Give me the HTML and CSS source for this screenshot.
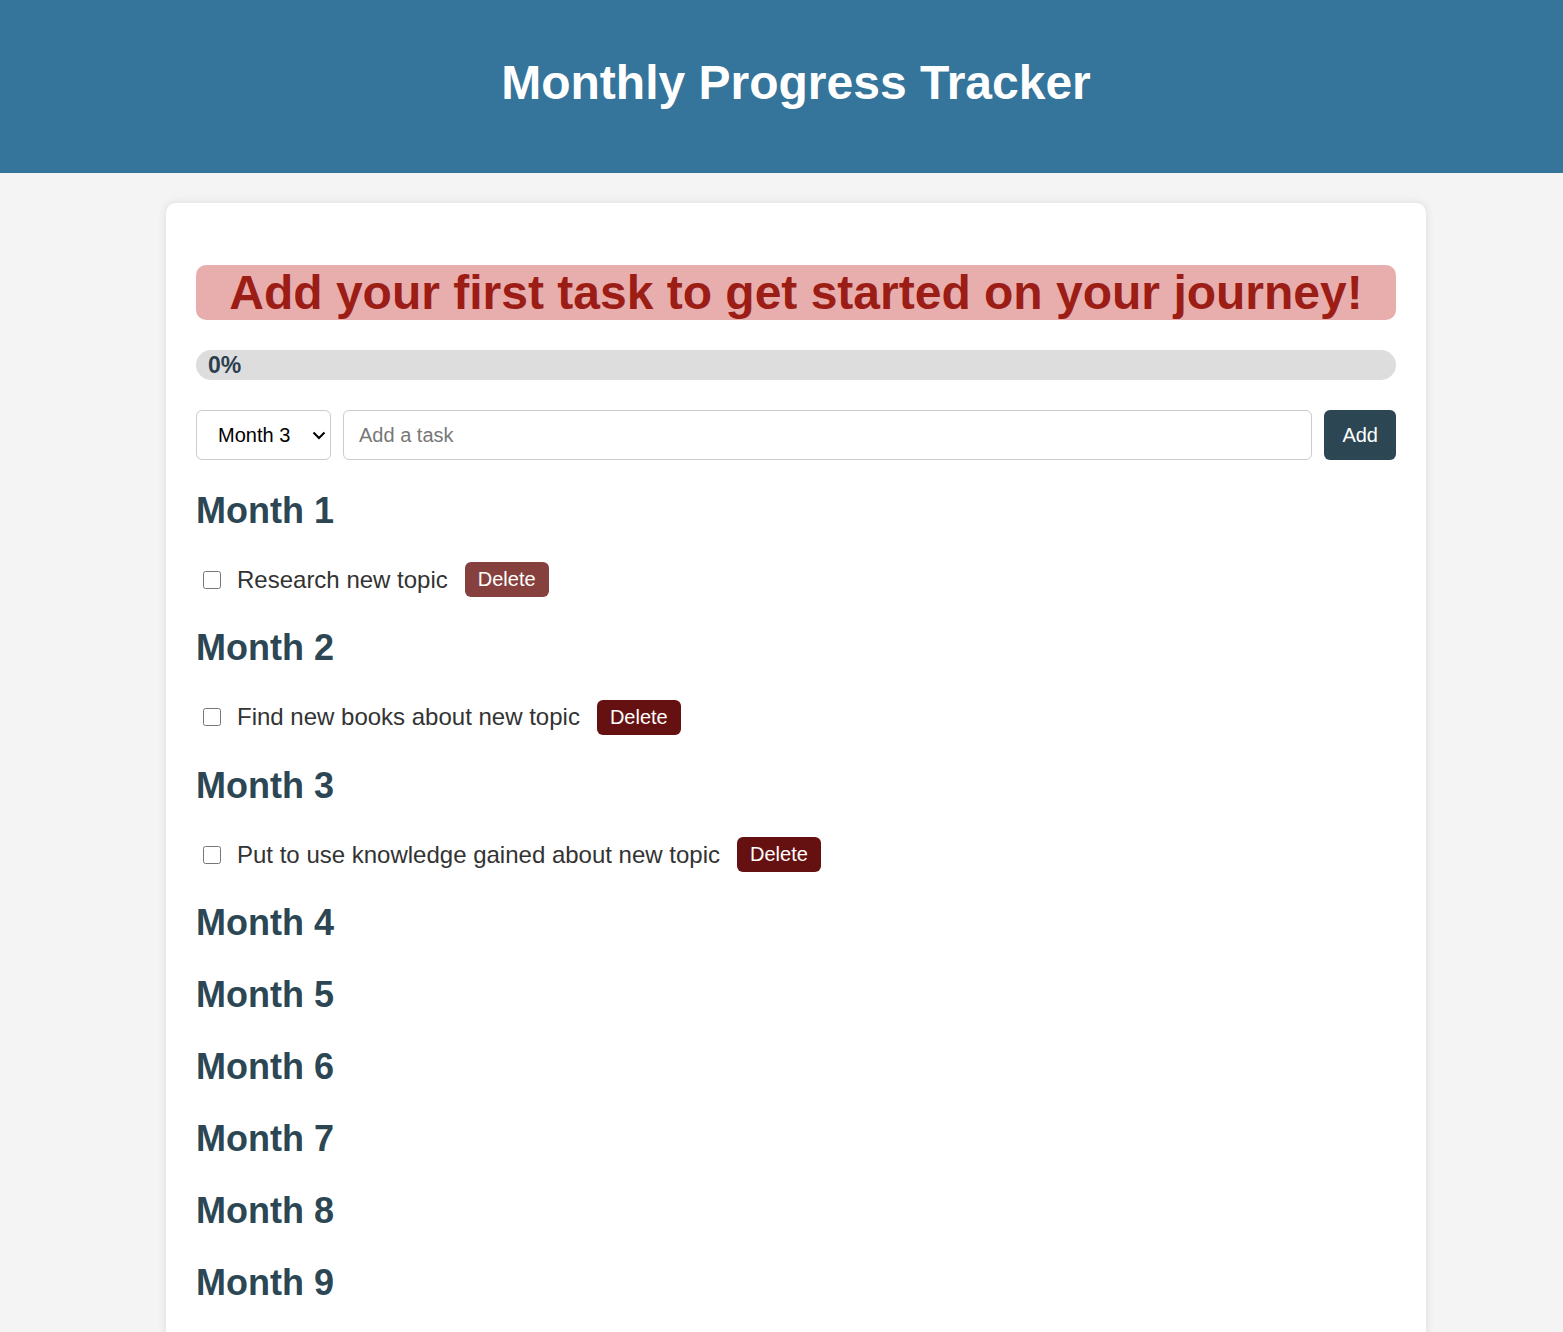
FILE: index.html
```html
<!DOCTYPE html>
<html lang="en">
<head>
<meta charset="utf-8">
<title>Monthly Progress Tracker</title>
<link rel="stylesheet" href="styles.css">
</head>
<body>
<header class="site-header">
  <h1 class="site-title">Monthly Progress Tracker</h1>
</header>
<main class="page">
  <section class="card">
    <h2 class="banner">Add your first task to get started on your journey!</h2>
    <div class="progress"><div class="progress-fill" style="width:0%"></div><span class="progress-label">0%</span></div>
    <form class="controls" onsubmit="return false">
      <div class="select-wrap">
        <select class="month-select">
          <option>Month 1</option>
          <option>Month 2</option>
          <option selected>Month 3</option>
          <option>Month 4</option>
          <option>Month 5</option>
          <option>Month 6</option>
          <option>Month 7</option>
          <option>Month 8</option>
          <option>Month 9</option>
          <option>Month 10</option>
          <option>Month 11</option>
          <option>Month 12</option>
        </select>
        <svg class="select-arrow" width="14" height="9" viewBox="0 0 14 9" aria-hidden="true"><path d="M1.5 1.5 L7 7 L12.5 1.5" fill="none" stroke="#000" stroke-width="2"/></svg>
      </div>
      <input class="task-input" type="text" placeholder="Add a task">
      <button class="add-btn" type="button">Add</button>
    </form>
    <div class="months">
      <div class="month">
        <h3 class="month-title">Month 1</h3>
        <ul class="tasks">
          <li class="task"><input type="checkbox" class="task-check"><span class="task-text">Research new topic</span><button class="delete-btn delete-hover" type="button">Delete</button></li>
        </ul>
      </div>
      <div class="month">
        <h3 class="month-title">Month 2</h3>
        <ul class="tasks">
          <li class="task"><input type="checkbox" class="task-check"><span class="task-text">Find new books about new topic</span><button class="delete-btn" type="button">Delete</button></li>
        </ul>
      </div>
      <div class="month">
        <h3 class="month-title">Month 3</h3>
        <ul class="tasks">
          <li class="task"><input type="checkbox" class="task-check"><span class="task-text">Put to use knowledge gained about new topic</span><button class="delete-btn" type="button">Delete</button></li>
        </ul>
      </div>
      <div class="month"><h3 class="month-title">Month 4</h3></div>
      <div class="month"><h3 class="month-title">Month 5</h3></div>
      <div class="month"><h3 class="month-title">Month 6</h3></div>
      <div class="month"><h3 class="month-title">Month 7</h3></div>
      <div class="month"><h3 class="month-title">Month 8</h3></div>
      <div class="month"><h3 class="month-title">Month 9</h3></div>
      <div class="month"><h3 class="month-title">Month 10</h3></div>
      <div class="month"><h3 class="month-title">Month 11</h3></div>
      <div class="month"><h3 class="month-title">Month 12</h3></div>
    </div>
  </section>
</main>
</body>
</html>
```
FILE: styles.css
```css
* { box-sizing: border-box; }

body {
  margin: 0;
  background: #f4f4f4;
  font-family: "Liberation Sans", Arial, sans-serif;
  color: #333;
}

.site-header {
  background: #35749b;
  padding: 55px 0 63px 29px;
  text-align: center;
}

.site-title {
  margin: 0;
  color: #fff;
  font-size: 48px;
  font-weight: bold;
  line-height: normal;
}

.page {
  padding: 30px 0 30px 29px;
}

.card {
  width: 1260px;
  margin: 0 auto;
  background: #fff;
  border-radius: 10px;
  box-shadow: 0 0 10px rgba(0, 0, 0, 0.1);
  padding: 30px;
}

.banner {
  margin: 32px 0 30px;
  background: #e8aeae;
  color: #9b1d15;
  border-radius: 10px;
  font-size: 48px;
  font-weight: bold;
  line-height: normal;
  text-align: center;
}

.progress {
  position: relative;
  height: 30px;
  background: #ddd;
  border-radius: 15px;
  overflow: hidden;
  margin-bottom: 30px;
  display: flex;
  align-items: center;
}

.progress-fill {
  position: absolute;
  left: 0;
  top: 0;
  bottom: 0;
  background: #35749b;
}

.progress-label {
  position: relative;
  padding-left: 12px;
  font-size: 23px;
  font-weight: bold;
  color: #2c3e50;
  line-height: 30px;
}

.controls {
  display: flex;
  gap: 12px;
  height: 50px;
  margin: 0 0 29.5px;
}

.select-wrap {
  position: relative;
  width: 135px;
  height: 50px;
}

.month-select {
  appearance: none;
  -webkit-appearance: none;
  width: 135px;
  height: 50px;
  border: 1px solid #ccc;
  border-radius: 6px;
  background: #fff;
  padding: 0 30px 0 21px;
  font-family: "Liberation Sans", Arial, sans-serif;
  font-size: 20px;
  color: #000;
}

.select-arrow {
  position: absolute;
  right: 5px;
  top: 21px;
  pointer-events: none;
}

.task-input {
  flex: 1;
  height: 50px;
  border: 1px solid #ccc;
  border-radius: 6px;
  padding: 0 15px;
  font-family: "Liberation Sans", Arial, sans-serif;
  font-size: 20px;
  color: #333;
}

.task-input::placeholder {
  color: #777;
}

.add-btn {
  height: 50px;
  padding: 0 18px;
  border: none;
  border-radius: 6px;
  background: #2c4753;
  color: #fff;
  font-family: "Liberation Sans", Arial, sans-serif;
  font-size: 20px;
}

.months {
  display: flex;
  flex-direction: column;
  gap: 30px;
}

.month-title {
  margin: 0;
  font-size: 36px;
  font-weight: bold;
  line-height: normal;
  color: #2c4753;
}

.tasks {
  list-style: none;
  margin: 30.5px 0 0;
  padding: 0;
}

.task {
  display: flex;
  align-items: center;
  height: 35px;
}

.task-check {
  width: 18px;
  height: 18px;
  margin: 0 16px 0 7px;
}

.task-text {
  font-size: 24px;
  color: #333;
}

.delete-btn {
  margin-left: 17px;
  height: 35px;
  padding: 0 13px;
  border: none;
  border-radius: 6px;
  background: #661111;
  color: #fff;
  font-family: "Liberation Sans", Arial, sans-serif;
  font-size: 20px;
}

.delete-btn.delete-hover {
  background: #86413e;
}
```
